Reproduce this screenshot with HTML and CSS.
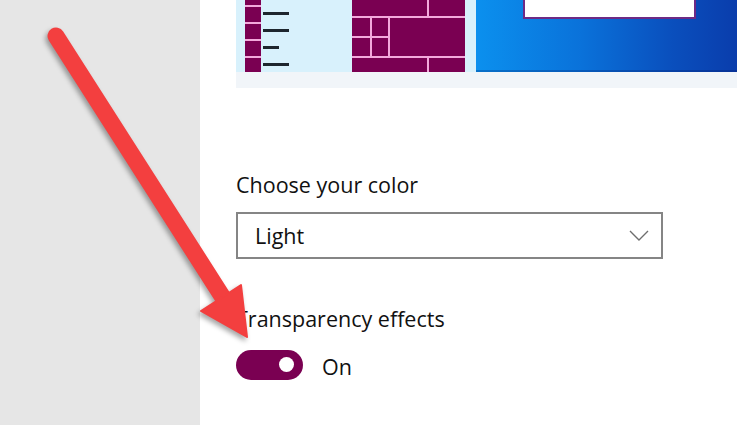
FILE: index.html
```html
<!DOCTYPE html>
<html lang="en">
<head>
<meta charset="utf-8">
<title>Colors</title>
<link rel="stylesheet" href="styles.css">
</head>
<body>
<div class="page">
  <aside class="sidebar"></aside>
  <main class="main">
    <div class="preview">
      <div class="preview-top">
        <div class="start">
          <div class="row first"><span class="cell"></span></div>
          <div class="row"><span class="cell"></span><span class="dash"></span></div>
          <div class="row"><span class="cell"></span><span class="dash"></span></div>
          <div class="row"><span class="cell"></span><span class="dash short"></span></div>
          <div class="row last"><span class="cell"></span><span class="dash"></span></div>
        </div>
        <div class="tiles">
          <span class="tile t-a"></span>
          <span class="tile t-b"></span>
          <span class="tile t-c"></span>
          <span class="tile t-d"></span>
          <span class="tile t-g"></span>
          <span class="tile t-e"></span>
          <span class="tile t-f"></span>
          <span class="tile t-h"></span>
          <span class="tile t-i"></span>
        </div>
        <div class="desktop"><div class="window"></div></div>
      </div>
      <div class="preview-strip"></div>
    </div>

    <div class="label label-color">Choose your color</div>
    <div class="select">
      <span class="select-value">Light</span>
      <svg class="chevron" width="20" height="11" viewBox="0 0 20 11" aria-hidden="true">
        <path d="M1 1 L10 10 L19 1" fill="none" stroke="#6e6e6e" stroke-width="1.4"/>
      </svg>
    </div>

    <div class="label label-transparency">Transparency effects</div>
    <div class="toggle-row">
      <span class="toggle"><span class="knob"></span></span>
      <span class="toggle-text">On</span>
    </div>
  </main>

  <svg class="arrow" width="750" height="425" viewBox="0 0 750 425" aria-hidden="true">
    <g class="arrow-shape">
      <path d="M56 36 L222 296" stroke="#f33f3f" stroke-width="17" stroke-linecap="round" fill="none"/>
      <polygon points="201,311 241,285 247,337" fill="#f33f3f" stroke="#f33f3f" stroke-width="2" stroke-linejoin="round"/>
    </g>
  </svg>
</div>
</body>
</html>
```

FILE: styles.css
```css
* {
  box-sizing: border-box;
}

html, body {
  margin: 0;
  padding: 0;
  background: #ffffff;
}

.page {
  position: relative;
  width: 750px;
  height: 425px;
  overflow: hidden;
  display: flex;
  font-family: "Open Sans", "Noto Sans", sans-serif;
  color: #111111;
}

.sidebar {
  width: 200px;
  flex: none;
  background: #e6e6e6;
}

.main {
  flex: 1;
  padding-left: 36px;
  display: flex;
  flex-direction: column;
  align-items: flex-start;
}

/* ---------- preview ---------- */
.preview {
  width: 501px;
}

.preview-top {
  height: 72px;
  display: flex;
  background: #d8f1fc;
}

.start {
  width: 116px;
  padding-left: 9px;
  display: flex;
  flex-direction: column;
}

.row {
  height: 17px;
  display: flex;
  align-items: center;
}

.row.first {
  height: 5px;
}

.row.last {
  height: 16px;
}

.cell {
  width: 16px;
  align-self: stretch;
  background: #7a0052;
  border-top: 2px solid #f3a9dc;
}

.row.first .cell {
  border-top: none;
}

.dash {
  width: 26px;
  height: 3px;
  margin-left: 2px;
  background: #1d262e;
}

.dash.short {
  width: 16px;
}

.tiles {
  width: 113px;
  height: 72px;
  display: grid;
  grid-template-columns: 18px 16px 37px 36px;
  grid-template-rows: 16px 18px 18px 14px;
  gap: 2px;
  background: #f3a9dc;
}

.tile {
  background: #7a0052;
}

.t-a { grid-column: 1 / 4; grid-row: 1; }
.t-b { grid-column: 4; grid-row: 1; }
.t-c { grid-column: 1; grid-row: 2; }
.t-d { grid-column: 2; grid-row: 2; }
.t-e { grid-column: 1; grid-row: 3; }
.t-f { grid-column: 2; grid-row: 3; }
.t-g { grid-column: 3 / 5; grid-row: 2 / 4; }
.t-h { grid-column: 1 / 4; grid-row: 4; }
.t-i { grid-column: 4; grid-row: 4; }

.desktop {
  width: 261px;
  margin-left: 11px;
  background: linear-gradient(90deg, #0b90ee 0%, #0a72da 40%, #0a4fbd 75%, #0a3dac 100%);
  box-shadow: inset 0 -2px 0 rgba(0, 20, 90, 0.25);
  padding-left: 47px;
}

.window {
  width: 173px;
  height: 19px;
  background: #ffffff;
  border: 2px solid #6d2a86;
  border-top: none;
}

.preview-strip {
  height: 16px;
  background: #f1f5f9;
}

/* ---------- form ---------- */
.label {
  font-size: 21.5px;
  line-height: 29px;
  white-space: nowrap;
}

.label-color {
  margin-top: 82px;
}

.select {
  margin-top: 13px;
  width: 427px;
  height: 47px;
  border: 2px solid #858585;
  display: flex;
  align-items: center;
  justify-content: space-between;
  padding: 0 12px 0 17px;
}

.select-value {
  font-size: 21.5px;
  line-height: 29px;
}

.chevron {
  display: block;
}

.label-transparency {
  margin-top: 45px;
}

.toggle-row {
  margin-top: 15px;
  display: flex;
  align-items: center;
}

.toggle {
  width: 67px;
  height: 30px;
  border-radius: 15px;
  background: #7a0052;
  display: flex;
  align-items: center;
  justify-content: flex-end;
  padding-right: 9px;
}

.knob {
  width: 15px;
  height: 15px;
  border-radius: 50%;
  background: #ffffff;
}

.toggle-text {
  margin-left: 19px;
  font-size: 21.5px;
  line-height: 29px;
  padding-top: 4px;
}

/* ---------- annotation arrow ---------- */
.arrow {
  position: absolute;
  top: 0;
  left: 0;
  pointer-events: none;
}

.arrow-shape {
  filter: drop-shadow(-2px 3px 2.5px rgba(0, 0, 0, 0.35));
}
```
